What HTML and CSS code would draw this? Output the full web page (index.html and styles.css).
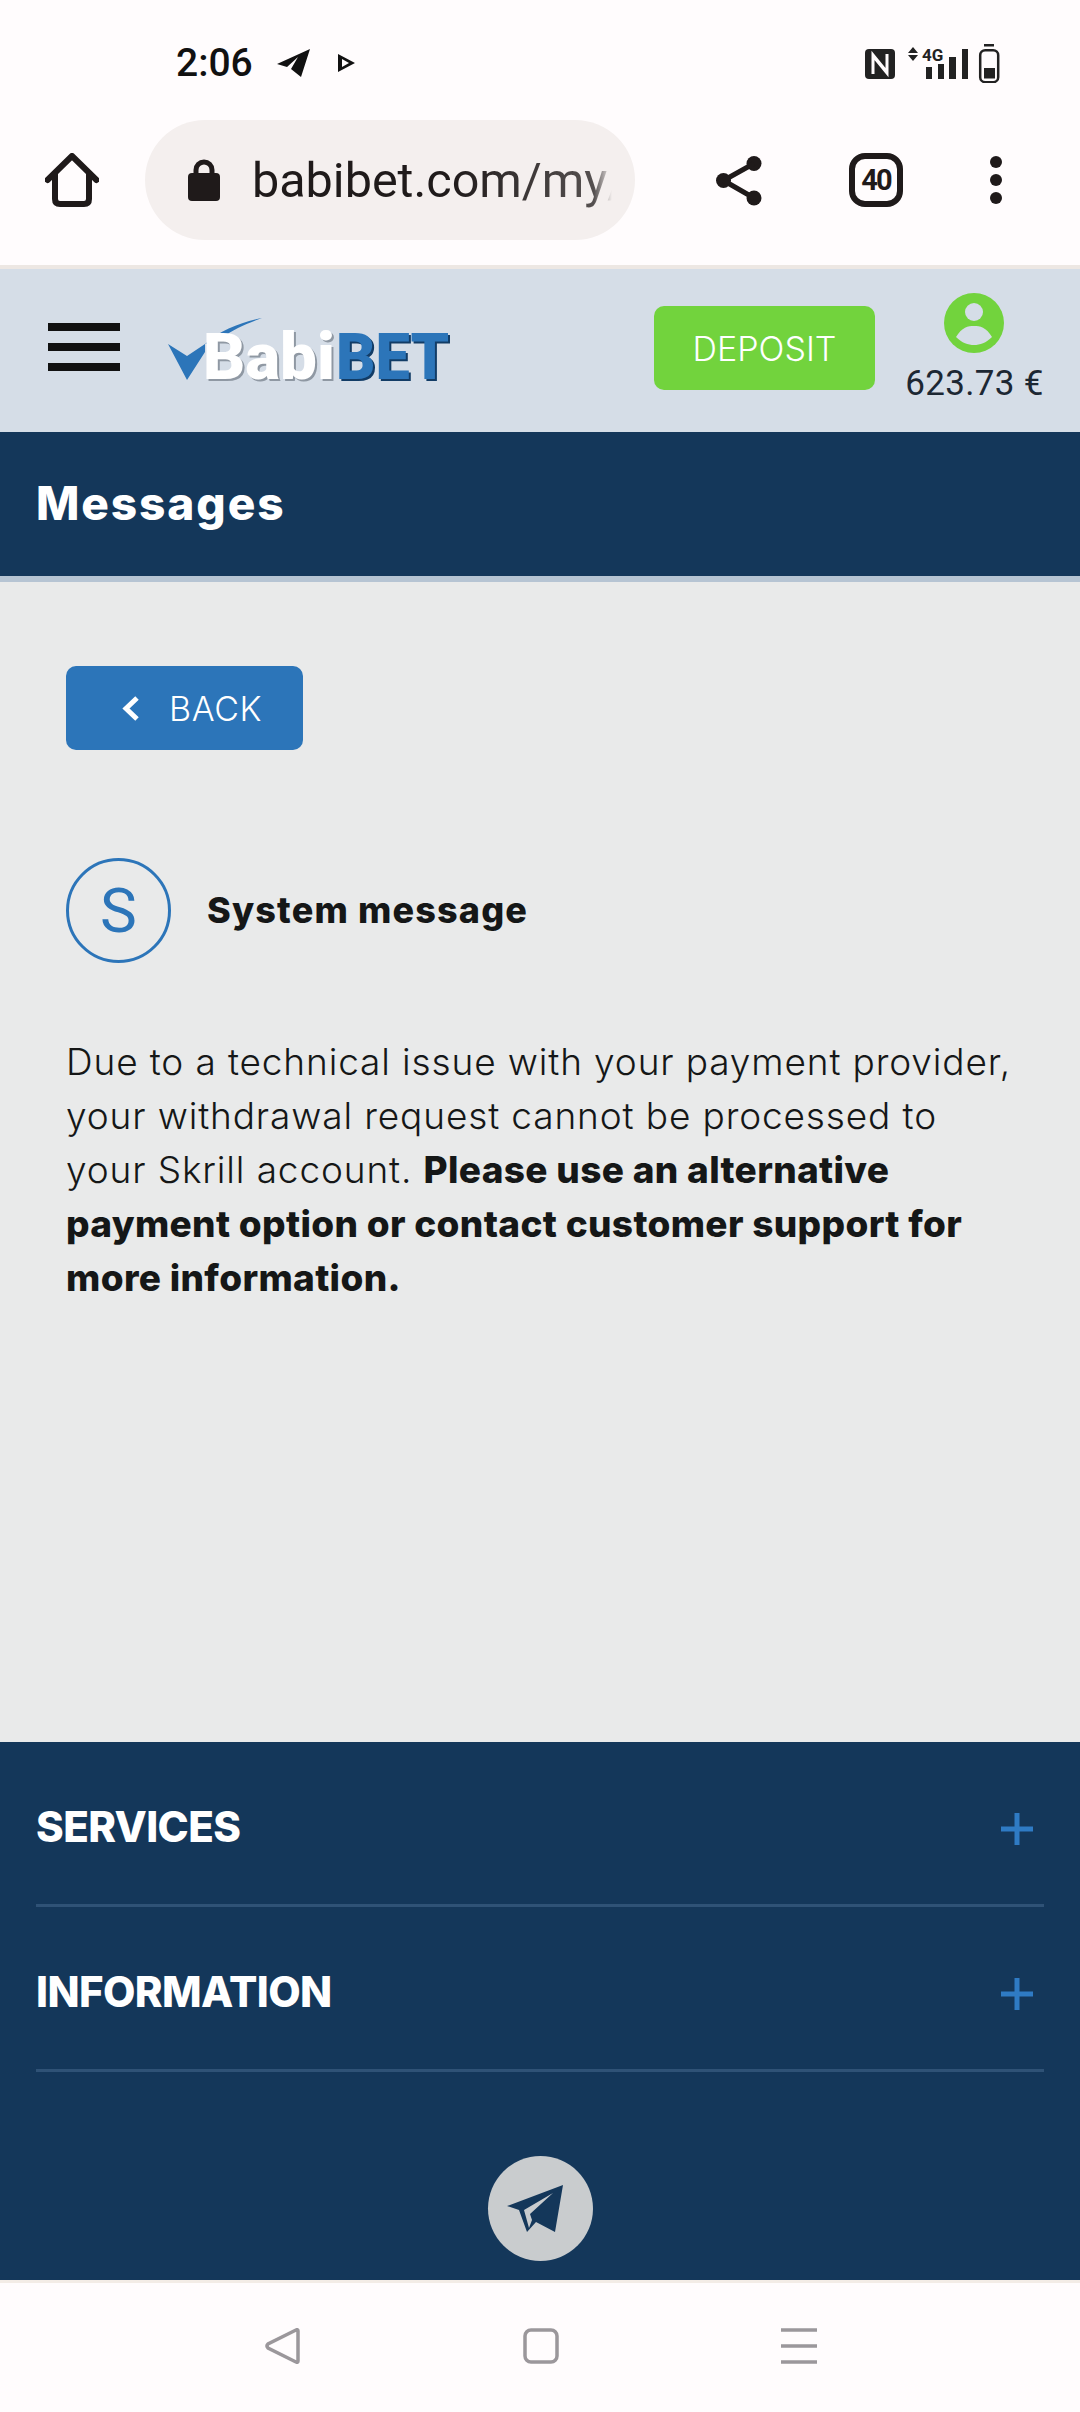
FILE: index.html
```html
<!DOCTYPE html>
<html lang="en">
<head>
    <meta charset="UTF-8">
    <meta name="viewport" content="width=device-width, initial-scale=1.0">
    <title>BabiBET - Messages</title>
    <link rel="stylesheet" href="styles.css">
</head>
<body>
    <!-- Phone status bar -->
    <div class="status-bar">
        <span class="status-time">2:06</span>
        <svg class="status-plane" viewBox="0 0 33 28"><path d="M33 0 L0 15 L10 18 L21 8 L14 20 L24 28 Z"/></svg>
        <svg class="status-play" viewBox="0 0 17 18"><path d="M0 0 L17 9 L0 18 Z M4 5 V13 L11 9 Z" fill-rule="evenodd"/></svg>
        <svg class="status-icons" viewBox="0 0 135 40">
            <rect x="0" y="6" width="30" height="30" rx="4"/>
            <path class="nfc-n" d="M8 31 V12 L21 28 M22 11 V30 L9 14"/>
            <path d="M48 4 L53 10 H43 Z M43 12 H53 L48 18 Z"/>
            <text class="status-4g" x="57" y="18">4G</text>
            <rect x="61" y="24" width="6" height="12"/>
            <rect x="73" y="21" width="6" height="15"/>
            <rect x="84" y="14" width="7" height="22"/>
            <rect x="97" y="6" width="6" height="30"/>
            <rect x="119" y="1" width="10" height="2.5"/>
            <rect class="batt-body" x="115.2" y="7.2" width="18" height="32" rx="5"/>
            <rect x="119" y="25" width="11" height="10.5"/>
        </svg>
    </div>

    <!-- Browser toolbar -->
    <div class="toolbar">
        <svg class="home-icon" viewBox="0 0 54 54">
            <path d="M2.5 27 L27 3 L51.5 27"/>
            <path d="M10 21 V46 Q10 51 15 51 H39 Q44 51 44 46 V21"/>
        </svg>
        <div class="url-pill">
            <svg class="lock-icon" viewBox="0 0 32 42">
                <path class="lock-shackle" d="M8 18 V11 a8 8 0 0 1 16 0 V18"/>
                <rect x="0" y="14" width="32" height="28" rx="4"/>
            </svg>
            <span class="url-text">babibet.com/my/messages</span>
        </div>
        <svg class="share-icon" viewBox="0 0 46 50">
            <circle cx="7.500" cy="24.500" r="7.500"/>
            <circle cx="38" cy="7.500" r="7.500"/>
            <circle cx="38" cy="42" r="7.500"/>
            <path d="M7.500 24.500 L38 7.500 M7.500 24.500 L38 42"/>
        </svg>
        <div class="tab-count">40</div>
        <div class="menu-dots"><i></i><i></i><i></i></div>
    </div>

    <!-- Site header -->
    <div class="site-header">
        <div class="hamburger"><i></i><i></i><i></i></div>
        <svg class="logo" viewBox="0 0 283 65">
            <path class="logo-check" d="M0 26 L19 38 L37 26 L37 34 L19 62 Z"/>
            <path class="logo-check" d="M37 26 C52 12 74 4 94 0 C78 6 66 11 54 20 Z"/>
            <text class="logo-babi-shadow" x="37" y="63" textLength="132" lengthAdjust="spacingAndGlyphs">Babi</text>
            <text class="logo-babi" x="35" y="61" textLength="132" lengthAdjust="spacingAndGlyphs">Babi</text>
            <text class="logo-bet-shadow" x="170" y="63" textLength="113" lengthAdjust="spacingAndGlyphs">BET</text>
            <text class="logo-bet" x="168" y="61" textLength="113" lengthAdjust="spacingAndGlyphs">BET</text>
        </svg>
        <a href="#" class="deposit-btn">DEPOSIT</a>
        <div class="account">
            <svg class="user-icon" viewBox="0 0 60 60">
                <circle class="user-bg" cx="30" cy="30" r="30"/>
                <circle class="user-fg" cx="30" cy="19" r="9"/>
                <path class="user-fg" d="M12 44 C18 34 24 33 30 33 C36 33 42 34 48 44 C42 50 36 52 30 52 C24 52 18 50 12 44 Z"/>
            </svg>
            <div class="balance">623.73 €</div>
        </div>
    </div>

    <div class="page-title">
        <h1>Messages</h1>
    </div>

    <!-- Message content -->
    <div class="main-content">
        <a href="#" class="back-btn">
            <svg class="back-chevron" viewBox="0 0 18 27"><path d="M15 3 L4 13.500 L15 24"/></svg>
            BACK
        </a>
        <div class="message-head">
            <div class="avatar">S</div>
            <div class="message-from">System message</div>
        </div>
        <p class="message-body">Due to a technical issue with your payment provider, your withdrawal request cannot be processed to your Skrill account. <b>Please use an alternative payment option or contact customer support for more information.</b></p>
    </div>

    <!-- Footer -->
    <div class="footer">
        <div class="footer-row"><span>SERVICES</span><svg class="plus" viewBox="0 0 32 32"><path d="M16 0 V32 M0 16 H32"/></svg></div>
        <div class="footer-row"><span>INFORMATION</span><svg class="plus" viewBox="0 0 32 32"><path d="M16 0 V32 M0 16 H32"/></svg></div>
        <div class="telegram-btn">
            <svg viewBox="0 0 105 105">
                <path class="tg-dark" d="M75 29 L19 50 L31 54 L39 76 L48 66 L67 76 Z"/>
                <path class="tg-light" d="M65 37 L36 54 L41 72 L44 64 L42 58 Z"/>
            </svg>
        </div>
    </div>

    <!-- Phone navigation bar -->
    <div class="nav-bar">
        <svg class="nav-icon" viewBox="0 0 36 36"><path d="M33 3 V33 Q33 35 31 34 L3 20 Q1 18 3 16 L31 2 Q33 1 33 3 Z"/></svg>
        <svg class="nav-icon" viewBox="0 0 36 36"><rect x="2" y="2" width="32" height="32" rx="6"/></svg>
        <svg class="nav-icon" viewBox="0 0 36 36"><path class="nav-lines" d="M0 2 H36 M0 18 H36 M0 34 H36"/></svg>
    </div>
</body>
</html>
```

FILE: styles.css
```css
/* Global Styles */
* {
    margin: 0;
    padding: 0;
    box-sizing: border-box;
}

html, body {
    width: 1080px;
    height: 2412px;
    overflow: hidden;
}

body {
    font-family: 'Inter', 'Noto Sans', sans-serif;
    background-color: #fffcfd;
    color: #151717;
    display: flex;
    flex-direction: column;
}

a {
    text-decoration: none;
}

/* Status bar */
.status-bar {
    height: 120px;
    display: flex;
    align-items: center;
    padding: 6px 80px 0 176px;
    font-family: 'Roboto', sans-serif;
    flex-shrink: 0;
}

.status-time {
    font-size: 39px;
    font-weight: 500;
    color: #111;
    width: 101px;
}

.status-plane {
    width: 33px;
    height: 28px;
    fill: #111;
}

.status-play {
    width: 17px;
    height: 18px;
    margin-left: 28px;
    fill: #111;
}

.status-icons {
    width: 135px;
    height: 40px;
    margin-left: auto;
    fill: #222;
}

.nfc-n {
    fill: none;
    stroke: #fffcfd;
    stroke-width: 3;
}

.batt-body {
    fill: none;
    stroke: #222;
    stroke-width: 2.500;
}

.status-4g {
    font-family: 'Roboto', sans-serif;
    font-size: 17px;
    font-weight: 700;
}

/* Browser toolbar */
.toolbar {
    height: 149px;
    flex-shrink: 0;
    display: flex;
    align-items: flex-start;
    padding-left: 45px;
    border-bottom: 4px solid #ede7e3;
}

.home-icon {
    width: 54px;
    height: 54px;
    margin: 33px 46px 0 0;
    fill: none;
    stroke: #1f1a1a;
    stroke-width: 6;
    stroke-linecap: round;
    stroke-linejoin: round;
}

.url-pill {
    width: 490px;
    height: 120px;
    border-radius: 60px;
    background-color: #f4efee;
    display: flex;
    align-items: center;
    padding-left: 43px;
}

.lock-icon {
    width: 32px;
    height: 42px;
    fill: #1f1a1a;
    flex-shrink: 0;
}

.lock-shackle {
    fill: none;
    stroke: #1f1a1a;
    stroke-width: 5;
}

.url-text {
    width: 360px;
    margin-left: 32px;
    overflow: hidden;
    white-space: nowrap;
    font-family: 'Roboto', sans-serif;
    font-size: 48.500px;
    color: #1f1a1a;
    -webkit-mask-image: linear-gradient(to right, #000 55%, rgba(0, 0, 0, 0.75) 95%, transparent 100%);
    mask-image: linear-gradient(to right, #000 55%, rgba(0, 0, 0, 0.75) 95%, transparent 100%);
}

.share-icon {
    width: 46px;
    height: 50px;
    margin: 36px 0 0 81px;
    fill: #1f1a1a;
    stroke: #1f1a1a;
    stroke-width: 0;
}

.share-icon path {
    stroke-width: 5;
}

.tab-count {
    width: 54px;
    height: 54px;
    margin: 33px 0 0 87px;
    border: 6px solid #1f1a1a;
    border-radius: 16px;
    display: flex;
    align-items: center;
    justify-content: center;
    font-family: 'Roboto', sans-serif;
    font-size: 29px;
    font-weight: 700;
    letter-spacing: -2px;
    color: #1f1a1a;
}

.menu-dots {
    margin: 36px 0 0 87px;
    display: flex;
    flex-direction: column;
    gap: 6px;
}

.menu-dots i {
    display: block;
    width: 12px;
    height: 12px;
    border-radius: 50%;
    background-color: #1f1a1a;
}

/* Site header */
.site-header {
    height: 163px;
    flex-shrink: 0;
    background-color: #d5dde7;
    display: flex;
    align-items: center;
    padding: 0 37px 0 48px;
}

.hamburger {
    display: flex;
    flex-direction: column;
    gap: 12px;
    width: 72px;
    margin-top: -7px;
}

.hamburger i {
    display: block;
    height: 8px;
    background-color: #111;
}

.logo {
    width: 283px;
    height: 65px;
    margin: -1px 0 0 48px;
    overflow: visible;
}

.logo-check {
    fill: #2c75b9;
}

.logo-babi, .logo-babi-shadow, .logo-bet, .logo-bet-shadow {
    font-family: 'Roboto', sans-serif;
    font-size: 64px;
    font-weight: 900;
}

.logo-babi { fill: #fff; }
.logo-babi-shadow { fill: #8f98a3; }
.logo-bet { fill: #2c75b9; }
.logo-bet-shadow { fill: #123c66; }

.deposit-btn {
    width: 221px;
    height: 84px;
    margin: -5px 31px 0 auto;
    border-radius: 10px;
    background-color: #72d33d;
    color: #fff;
    font-size: 34px;
    font-weight: 300;
    display: flex;
    align-items: center;
    justify-content: center;
}

.account {
    width: 137px;
    display: flex;
    flex-direction: column;
    align-items: center;
    margin-top: -4px;
}

.user-icon {
    width: 60px;
    height: 60px;
    margin-right: 2px;
}

.user-bg { fill: #72d33d; }
.user-fg { fill: #d5dde7; }

.balance {
    font-family: 'Roboto', sans-serif;
    font-size: 35px;
    letter-spacing: 0.300px;
    line-height: 40px;
    margin-top: 11px;
    color: #1c2733;
    white-space: nowrap;
}

/* Page title */
.page-title {
    height: 150px;
    flex-shrink: 0;
    background-color: #14375a;
    border-bottom: 6px solid #b6c4d3;
    display: flex;
    align-items: center;
    padding: 0 0 3px 36px;
}

.page-title h1 {
    font-size: 46px;
    font-weight: 800;
    letter-spacing: 1.900px;
    color: #fff;
}

/* Main content */
.main-content {
    flex-grow: 1;
    background-color: #e9eaea;
    padding: 84px 66px 0;
}

.back-btn {
    width: 237px;
    height: 84px;
    border-radius: 10px;
    background-color: #2c75b9;
    color: #fff;
    font-size: 34px;
    font-weight: 300;
    letter-spacing: 0.600px;
    display: flex;
    align-items: center;
    padding-left: 56px;
}

.back-chevron {
    width: 18px;
    height: 27px;
    margin-right: 29px;
    fill: none;
    stroke: #fff;
    stroke-width: 5;
}

.message-head {
    display: flex;
    align-items: center;
    margin-top: 108px;
}

.avatar {
    width: 105px;
    height: 105px;
    border: 3px solid #2c75b9;
    border-radius: 50%;
    display: flex;
    align-items: center;
    justify-content: center;
    font-family: 'Roboto', sans-serif;
    font-size: 62px;
    color: #2c75b9;
}

.message-from {
    margin: -2px 0 0 36px;
    font-size: 36px;
    font-weight: 800;
    letter-spacing: 1.150px;
}

.message-body {
    margin-top: 72px;
    font-size: 37px;
    line-height: 54px;
    font-weight: 300;
    letter-spacing: 0.870px;
}

.message-body b {
    font-weight: 800;
    letter-spacing: 0.330px;
}

/* Footer */
.footer {
    height: 538px;
    flex-shrink: 0;
    background-color: #14375a;
    padding: 0 36px;
    color: #fff;
}

.footer-row {
    height: 165px;
    border-bottom: 3px solid #2f5276;
    display: flex;
    align-items: center;
    justify-content: space-between;
    padding: 6px 11px 0 0;
    font-size: 42px;
    font-weight: 800;
    letter-spacing: -0.600px;
}

.plus {
    width: 32px;
    height: 32px;
    margin-top: 6px;
    fill: none;
    stroke: #2f7bc4;
    stroke-width: 5;
}

.telegram-btn {
    width: 105px;
    height: 105px;
    margin: 84px auto 0;
    border-radius: 50%;
    background-color: #c9ccce;
}

.telegram-btn svg {
    display: block;
    width: 105px;
    height: 105px;
}

.tg-dark { fill: #14375a; }
.tg-light { fill: #c9ccce; }

/* Phone navigation bar */
.nav-bar {
    height: 132px;
    flex-shrink: 0;
    border-top: 3px solid #f3ece6;
    display: flex;
    gap: 222px;
    padding: 45px 0 0 265px;
}

.nav-icon {
    width: 36px;
    height: 36px;
    fill: none;
    stroke: #9b979b;
    stroke-width: 3.500;
}

.nav-lines {
    stroke-width: 3.500;
}
```
